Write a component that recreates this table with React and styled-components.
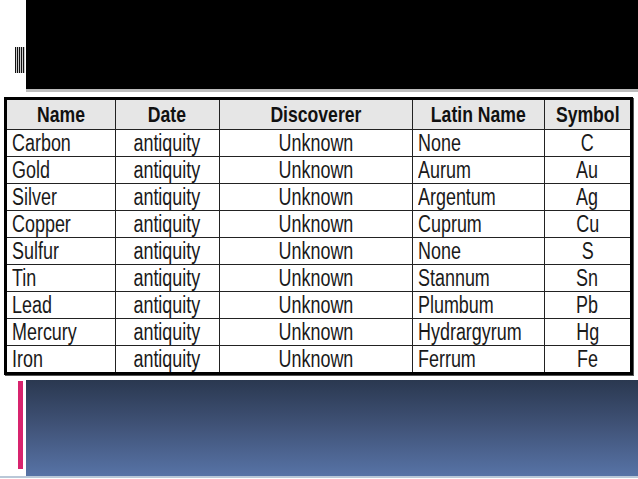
import React from "react";
import styled, { createGlobalStyle } from "styled-components";

const GlobalStyle = createGlobalStyle`
  html, body {
    margin: 0;
    padding: 0;
    background: #ffffff;
  }
  body {
    width: 638px;
    height: 479px;
    overflow: hidden;
    font-family: "Liberation Sans", Arial, sans-serif;
  }
`;

const Slide = styled.div`
  width: 638px;
  height: 479px;
  display: flex;
  flex-direction: column;
  background: #ffffff;
`;

const TitleRow = styled.div`
  display: flex;
  height: 92px;
`;

const Gutter = styled.div`
  width: 26px;
  display: flex;
  align-items: center;
  justify-content: flex-end;
  padding-top: 28px;
  box-sizing: border-box;
`;

const Stripes = styled.div`
  width: 10px;
  height: 26px;
  margin-right: 1px;
  background: repeating-linear-gradient(
    90deg,
    #111 0px,
    #111 1px,
    #c8c8c8 1px,
    #c8c8c8 2px
  );
`;

const TitleBox = styled.div`
  flex: 1;
  background: #000000;
  border-bottom: 3px solid #bdbdbd;
`;

const TableWrap = styled.div`
  padding: 5px 5px 0 4px;
`;

const Table = styled.table`
  width: 629px;
  border-collapse: collapse;
  border: 3px solid #000;
  table-layout: fixed;
  box-shadow: 1px 1px 0 #555;
`;

const HeadCell = styled.th`
  background: #e6e6e6;
  font-weight: bold;
  font-size: 22px;
  height: 29px;
  padding: 0;
  line-height: 1;
  color: #111;
  text-align: center;
  border: 1.5px solid #222;
  white-space: nowrap;
  overflow: hidden;
`;

const Cell = styled.td`
  font-size: 23px;
  height: 26px;
  padding: 0 0 0 ${(p) => (p.$left ? "5px" : "0")};
  line-height: 1;
  color: #1a1a1a;
  text-align: ${(p) => (p.$left ? "left" : "center")};
  border: 1.5px solid #222;
  white-space: nowrap;
  overflow: hidden;
`;

/* narrow face is not installed, so squeeze the regular one */
const Narrow = styled.span`
  display: inline-block;
  transform: scaleX(${(p) => p.$scale});
  transform-origin: ${(p) => (p.$left ? "left" : "center")} center;
`;

const BottomRow = styled.div`
  display: flex;
  height: 96px;
  margin-top: 5px;
  border-bottom: 2px solid #b9c8d8;
`;

const AccentGutter = styled.div`
  width: 26px;
  display: flex;
  justify-content: flex-end;
  padding-top: 1px;
`;

const AccentBar = styled.div`
  width: 5px;
  height: 88px;
  margin-right: 3px;
  background: #d8246e;
`;

const BlueBox = styled.div`
  flex: 1;
  background: linear-gradient(180deg, #2a3850 0%, #3f5175 45%, #5773a6 100%);
`;

const columns = [
  { label: "Name", width: 109, left: true },
  { label: "Date", width: 104 },
  { label: "Discoverer", width: 192 },
  { label: "Latin Name", width: 131, left: true },
  { label: "Symbol", width: 87 },
];

const elements = [
  ["Carbon", "antiquity", "Unknown", "None", "C"],
  ["Gold", "antiquity", "Unknown", "Aurum", "Au"],
  ["Silver", "antiquity", "Unknown", "Argentum", "Ag"],
  ["Copper", "antiquity", "Unknown", "Cuprum", "Cu"],
  ["Sulfur", "antiquity", "Unknown", "None", "S"],
  ["Tin", "antiquity", "Unknown", "Stannum", "Sn"],
  ["Lead", "antiquity", "Unknown", "Plumbum", "Pb"],
  ["Mercury", "antiquity", "Unknown", "Hydrargyrum", "Hg"],
  ["Iron", "antiquity", "Unknown", "Ferrum", "Fe"],
];

export default function App() {
  return (
    <>
      <GlobalStyle />
      <Slide>
        <TitleRow>
          <Gutter>
            <Stripes />
          </Gutter>
          <TitleBox />
        </TitleRow>
        <TableWrap>
          <Table>
            <colgroup>
              {columns.map((c) => (
                <col key={c.label} style={{ width: c.width }} />
              ))}
            </colgroup>
            <thead>
              <tr>
                {columns.map((c) => (
                  <HeadCell key={c.label}>
                    <Narrow $scale={0.8}>{c.label}</Narrow>
                  </HeadCell>
                ))}
              </tr>
            </thead>
            <tbody>
              {elements.map((row) => (
                <tr key={row[0]}>
                  {row.map((v, i) => (
                    <Cell key={i} $left={columns[i].left}>
                      <Narrow $scale={0.78} $left={columns[i].left}>
                        {v}
                      </Narrow>
                    </Cell>
                  ))}
                </tr>
              ))}
            </tbody>
          </Table>
        </TableWrap>
        <BottomRow>
          <AccentGutter>
            <AccentBar />
          </AccentGutter>
          <BlueBox />
        </BottomRow>
      </Slide>
    </>
  );
}
